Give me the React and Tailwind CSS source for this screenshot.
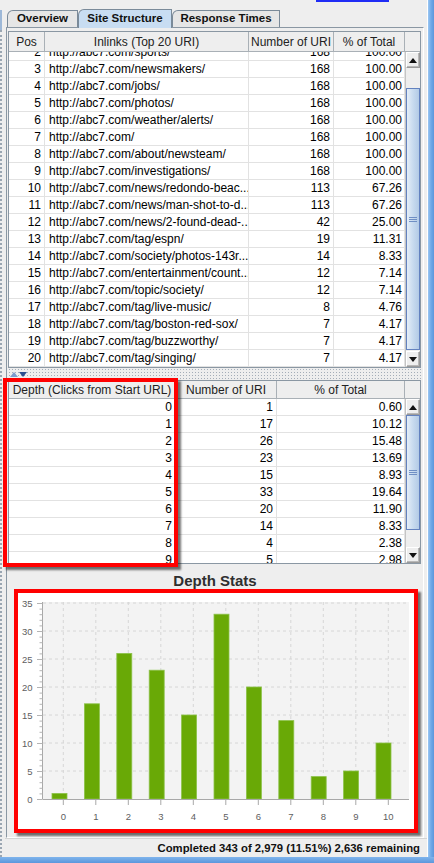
import React from 'react'

const inlinks = [
  [2, 'http://abc7.com/sports/', 168, '100.00'],
  [3, 'http://abc7.com/newsmakers/', 168, '100.00'],
  [4, 'http://abc7.com/jobs/', 168, '100.00'],
  [5, 'http://abc7.com/photos/', 168, '100.00'],
  [6, 'http://abc7.com/weather/alerts/', 168, '100.00'],
  [7, 'http://abc7.com/', 168, '100.00'],
  [8, 'http://abc7.com/about/newsteam/', 168, '100.00'],
  [9, 'http://abc7.com/investigations/', 168, '100.00'],
  [10, 'http://abc7.com/news/redondo-beac...', 113, '67.26'],
  [11, 'http://abc7.com/news/man-shot-to-d...', 113, '67.26'],
  [12, 'http://abc7.com/news/2-found-dead-...', 42, '25.00'],
  [13, 'http://abc7.com/tag/espn/', 19, '11.31'],
  [14, 'http://abc7.com/society/photos-143r...', 14, '8.33'],
  [15, 'http://abc7.com/entertainment/count...', 12, '7.14'],
  [16, 'http://abc7.com/topic/society/', 12, '7.14'],
  [17, 'http://abc7.com/tag/live-music/', 8, '4.76'],
  [18, 'http://abc7.com/tag/boston-red-sox/', 7, '4.17'],
  [19, 'http://abc7.com/tag/buzzworthy/', 7, '4.17'],
  [20, 'http://abc7.com/tag/singing/', 7, '4.17'],
]

const depths = [
  [0, 1, '0.60'],
  [1, 17, '10.12'],
  [2, 26, '15.48'],
  [3, 23, '13.69'],
  [4, 15, '8.93'],
  [5, 33, '19.64'],
  [6, 20, '11.90'],
  [7, 14, '8.33'],
  [8, 4, '2.38'],
  [9, 5, '2.98'],
  [10, 10, '5.95'],
]

const Arrow = ({ down }) => (
  <svg width="8" height="5" viewBox="0 0 8 5">
    <path d={down ? 'M0 0H8L4 5Z' : 'M4 0L8 5H0Z'} fill="#111" />
  </svg>
)

const ScrollButton = ({ down }) => (
  <div className="h-[16px] shrink-0 flex items-center justify-center bg-[#eeeeee] border border-[#9a9a9a] border-t-white border-l-white shadow-[inset_-1px_-1px_0_#b8b8b8]">
    <Arrow down={down} />
  </div>
)

// thumb + gaps get their heights as full class names
const ScrollBar = ({ height, gap, thumb }) => (
  <div className={`${height} w-[15px] shrink-0 flex flex-col bg-[#eeeeee] border-l border-[#c4c4c4]`}>
    <ScrollButton />
    <div className={`${gap} shrink-0`} />
    <div className={`${thumb} shrink-0 flex items-center justify-center border border-[#6382bf] bg-gradient-to-r from-[#e4eef8] via-[#c8dbef] to-[#b3cbe6]`}>
      <div className="flex flex-col gap-[1px]">
        <div className="w-[8px] h-px bg-[#6f8fc4]" />
        <div className="w-[8px] h-px bg-[#6f8fc4]" />
        <div className="w-[8px] h-px bg-[#6f8fc4]" />
      </div>
    </div>
    <div className="flex-1" />
    <ScrollButton down />
  </div>
)

const Head = ({ className = '', children }) => (
  <div className={`${className} flex items-center justify-center border-r border-[#a9b0b6] text-[#222] whitespace-nowrap overflow-hidden`}>
    {children}
  </div>
)

const Cell = ({ className = '', children }) => (
  <div className={`${className} h-[17px] leading-[17px] border-r border-b border-[#e2e2e2] whitespace-nowrap overflow-hidden`}>
    {children}
  </div>
)

function InlinksTable() {
  return (
    <div className="ml-[1px] w-[413px] border border-[#8a97a3] bg-white">
      <div className="relative z-10 flex h-[20px] bg-[#eeeeee] border-b border-[#a9b0b6]">
        <Head className="w-[36px]">Pos</Head>
        <Head className="w-[204px]">Inlinks (Top 20 URI)</Head>
        <Head className="w-[85px]">Number of URI</Head>
        <Head className="w-[71px]">% of Total</Head>
        <div className="flex-1" />
      </div>
      <div className="flex">
        <div className="w-[396px] h-[315px] overflow-hidden">
          <div className="-mt-[8px]">
            {inlinks.map(([pos, url, n, pct]) => (
              <div key={pos} className="flex">
                <Cell className="w-[36px] text-right pr-[3px]">{pos}</Cell>
                <Cell className="w-[204px] pl-[4px]">{url}</Cell>
                <Cell className="w-[85px] text-right pr-[3px]">{n}</Cell>
                <Cell className="w-[71px] text-right pr-[2px]">{pct}</Cell>
              </div>
            ))}
          </div>
        </div>
        <ScrollBar height="h-[315px]" gap="h-[20px]" thumb="h-[262px]" />
      </div>
    </div>
  )
}

function DepthTable() {
  return (
    <div className="relative ml-[1px] w-[413px] border border-[#8a97a3] bg-white">
      <div className="flex h-[18px] bg-[#eeeeee] border-b border-[#a9b0b6]">
        <Head className="w-[167px]">Depth (Clicks from Start URL)</Head>
        <Head className="w-[101px]">Number of URI</Head>
        <Head className="w-[128px]">% of Total</Head>
        <div className="flex-1" />
      </div>
      <div className="flex">
        <div className="w-[396px] h-[164px] overflow-hidden">
          {depths.map(([d, n, pct]) => (
            <div key={d} className="flex">
              <Cell className="w-[167px] text-right pr-[3px]">{d}</Cell>
              <Cell className="w-[101px] text-right pr-[3px]">{n}</Cell>
              <Cell className="w-[128px] text-right pr-[2px]">{pct}</Cell>
            </div>
          ))}
        </div>
        <ScrollBar height="h-[164px]" gap="h-0" thumb="h-[115px]" />
      </div>
      {/* red annotation box over the depth column */}
      <div className="absolute -left-[6px] -top-[3px] w-[175px] h-[189px] border-[4px] border-[#ff0000] shadow-[3px_3px_2px_rgba(0,0,0,0.55)] pointer-events-none" />
    </div>
  )
}

function DepthChart() {
  const y0 = 206
  const k = 5.6
  const majors = [0, 5, 10, 15, 20, 25, 30, 35]
  const minors = Array.from({ length: 36 }, (_, i) => i)
  return (
    <svg width="396" height="236" className="block" fontFamily="Liberation Sans, Arial, sans-serif">
      <rect x="0" y="0" width="396" height="236" fill="#ffffff" />
      <rect x="25" y="9" width="366" height="197" fill="#f3f3f3" />
      {majors.slice(1).map((t) => (
        <line key={t} x1="25" x2="391" y1={y0 - t * k} y2={y0 - t * k} stroke="#d6d6d6" strokeDasharray="3 3" />
      ))}
      {depths.map(([d]) => (
        <line key={d} x1={45.3 + 32.5 * d} x2={45.3 + 32.5 * d} y1="9" y2={y0} stroke="#d6d6d6" strokeDasharray="3 3" />
      ))}
      {depths.map(([d, v]) => (
        <rect key={d} x={34 + 32.4 * d} y={y0 - v * k} width="15" height={v * k} fill="#69a906" stroke="#8cc24a" strokeWidth="0.8" />
      ))}
      <line x1="24.5" x2="24.5" y1="9" y2={y0} stroke="#a8a8a8" />
      <line x1="24.5" x2="391" y1={y0 + 0.5} y2={y0 + 0.5} stroke="#a8a8a8" />
      {minors.map((t) => (
        <line key={t} x1={t % 5 === 0 ? 19 : 21.5} x2="24.5" y1={y0 - t * k + 0.5} y2={y0 - t * k + 0.5} stroke="#b4b4b4" />
      ))}
      {majors.map((t) => (
        <text key={t} x="14.5" y={y0 - t * k + 3.5} fontSize="9.5" fill="#606060" textAnchor="end">{t}</text>
      ))}
      {depths.map(([d]) => (
        <g key={d}>
          <line x1={45.3 + 32.5 * d} x2={45.3 + 32.5 * d} y1={y0 + 1} y2={y0 + 6} stroke="#a8a8a8" />
          <text x={45.3 + 32.5 * d} y="226.5" fontSize="9.5" fill="#606060" textAnchor="middle">{d}</text>
        </g>
      ))}
    </svg>
  )
}

const Tab = ({ selected, className = '', children }) => (
  <div
    className={`${className} flex items-center justify-center rounded-tl-[6px] border border-b-0 border-[#7a8a99] font-bold text-[11.5px] text-[#111] ${
      selected ? 'h-[19px] -mb-px relative z-10 bg-[#c8ddf2]' : 'h-[17px] bg-[#e6e6e6]'
    }`}
  >
    {children}
  </div>
)

export default function App() {
  return (
    <div className="w-[434px] h-[863px] flex flex-col bg-[#eeeeee] overflow-hidden font-['Liberation_Sans',Arial,sans-serif] text-[12px] text-black">
      <div className="flex flex-1 min-h-0">
        {/* left edge */}
        <div className="w-[5px] shrink-0 flex flex-col">
          <div className="h-[10px]" />
          <div className="h-[20px] w-[2px] bg-[#9db8d8]" />
          <div className="flex-1 w-[3px] border-l-2 border-dotted border-[#9aa6b2]" />
        </div>

        {/* main column */}
        <div className="w-[422px] shrink-0 flex flex-col">
          <div className="h-[9px] shrink-0">
            <div className="ml-[311px] w-[73px] h-[2px] bg-[#1f2cf5]" />
          </div>

          <div className="h-[18px] shrink-0 flex items-end pl-[2px]">
            <Tab className="w-[71px]">Overview</Tab>
            <Tab selected className="w-[94px]">Site Structure</Tab>
            <Tab className="w-[108px]">Response Times</Tab>
          </div>

          <div className="ml-[1px] w-[418px] h-[811px] shrink-0 flex flex-col border border-[#8a97a3] border-r-white border-b-white">
            <div className="h-[3px]" />
            <InlinksTable />

            {/* split pane divider */}
            <div className="h-[12px] ml-[1px] w-[413px] flex items-center gap-[1px] pl-[2px] bg-[radial-gradient(#a4adb8_0.8px,transparent_0.9px)] bg-[length:3px_3px]">
              <svg width="8" height="5" viewBox="0 0 8 5"><path d="M4 0L8 5H0Z" fill="#7d9ccc" /></svg>
              <svg width="8" height="5" viewBox="0 0 8 5"><path d="M0 0H8L4 5Z" fill="#2b4f8f" /></svg>
            </div>

            <DepthTable />

            <div className="h-[25px] shrink-0 flex items-center justify-center pt-[9px] text-[15px] font-bold text-[#2f2f2f]">
              Depth Stats
            </div>

            <div className="ml-[7px] w-[404px] border-[4px] border-[#ff0000] shadow-[3px_3px_2px_rgba(0,0,0,0.55)]">
              <DepthChart />
            </div>
          </div>

          <div className="h-[19px] shrink-0 flex items-center justify-end pr-[7px] border-t border-[#d4d4d4] text-[11.3px] font-bold text-[#111]">
            Completed 343 of 2,979 (11.51%) 2,636 remaining
          </div>
        </div>

        {/* window frame right */}
        <div className="w-[7px] shrink-0 bg-gradient-to-r from-[#9cc7f2] via-[#6fa9e8] to-[#5b97dc] border-l border-white" />
      </div>
      <div className="h-[6px] shrink-0 bg-gradient-to-b from-[#7fb4ec] to-[#5b97dc]" />
    </div>
  )
}
